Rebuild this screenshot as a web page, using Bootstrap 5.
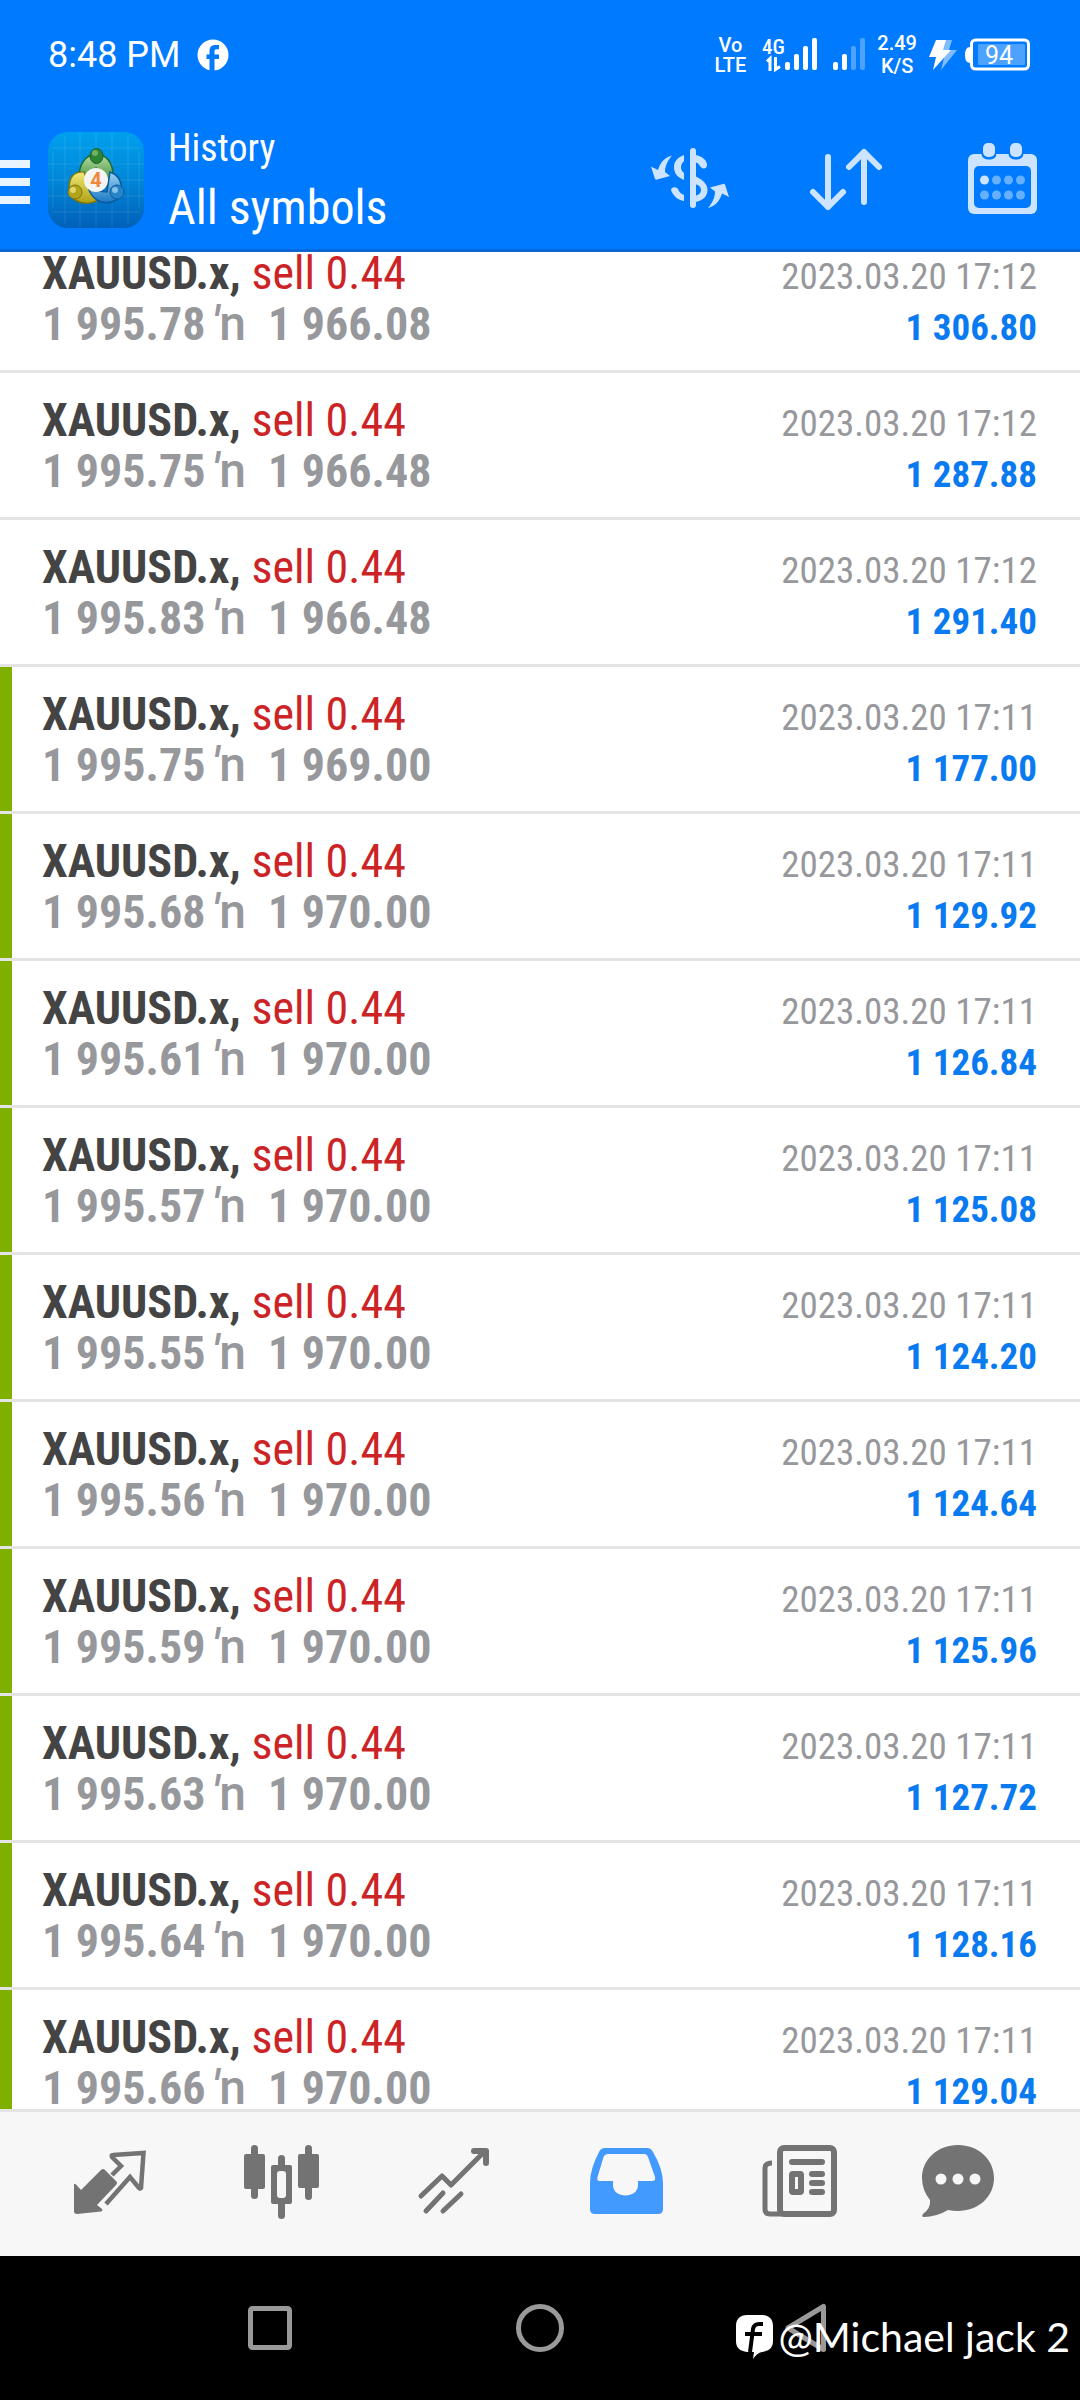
<!DOCTYPE html>
<html lang="en">
<head>
<meta charset="utf-8">
<meta name="viewport" content="width=device-width, initial-scale=1">
<title>History</title>
<link href="https://cdn.jsdelivr.net/npm/bootstrap@5.3.0/dist/css/bootstrap.min.css" rel="stylesheet">
<style>
  body { font-family: "Roboto Condensed", Roboto, sans-serif; background: #fff; }
  svg { display: block; flex: none; overflow: visible; }
  .topbar { background: #007aff; color: #fff; }
  .statusline { height: 108px; padding: 2px 50px 0 48px; font-family: Roboto, sans-serif; font-size: 36px; }
  .stacked { font-size: 20px; line-height: 20px; font-weight: 500; }
  .stacked.speed { line-height: 23px; }
  .appbar { height: 144px; padding-right: 33px; box-shadow: inset 0 -3px #0a68d4; }
  .appbar button, .tabs a { background: none; border: 0; padding: 0; }
  .appname { margin-left: 22px; }
  .appname .sub { font-size: 38px; line-height: 56px; }
  .appname h1 { font-size: 48px; line-height: 64px; font-weight: 400; margin: 0; }
  .tools { gap: 66px; }
  .deals { min-height: 0; }
  .deals ul { margin-top: -26px; }
  .deal { height: 147px; padding: 22px 43px 0 42px; border-bottom: 3px solid #e4e4e4; position: relative; }
  .deal div { font-size: 46px; line-height: 51px; height: 51px; white-space: pre; }
  .deal.closed::before { content: ""; position: absolute; left: 0; top: 0; bottom: 0; width: 12px; background: #7fb000; }
  .deal b { color: #444; }
  .side { color: #cc2426; }
  .price { color: #97989c; font-weight: 700; }
  .price span { font-family: Roboto, sans-serif; font-weight: 500; font-size: 48px; line-height: 40px; margin: 0 22px 0 6px; }
  time { font-size: 37px; color: #97989c; }
  .deal strong { font-size: 37px; color: #0a7af0; }
  .tabs { height: 147px; padding: 0 24px; background: #f7f7f7; border-top: 3px solid #e4e4e4; color: #737373; }
  .tabs a { color: inherit; }
  .tabs a.active { color: #429aff; }
  .sysnav { height: 144px; padding: 0 135px; background: #000; position: relative; color: #999; }
  .sysnav button { background: none; border: 0; padding: 0; color: inherit; }
  .credit { position: absolute; right: 10px; bottom: 38px; gap: 6px; font-family: Lato, sans-serif; font-size: 41px; line-height: 50px; color: #fff; }
</style>
<script src="https://cdn.jsdelivr.net/npm/bootstrap@5.3.0/dist/js/bootstrap.bundle.min.js"></script>
</head>
<body class="vh-100 d-flex flex-column overflow-hidden">

<header class="topbar flex-shrink-0">
  <div class="statusline d-flex align-items-center">
    <span>8:48 PM</span>
    <svg class="ms-3" width="32" height="32" viewBox="0 0 32 32"><circle cx="16" cy="16" r="15.500" fill="#fff"/><path d="M12.500 32V20H9.500v-4.500h3V12c0-4 2-6 6-6h3.500v4.300h-2.500c-1.500 0-2 .7-2 2v3.200h4.500V20h-4.500v12z" fill="#007aff"/></svg>
    <div class="ms-auto d-flex align-items-center">
      <div class="stacked text-center">Vo<br>LTE</div>
      <svg class="ms-3" width="55" height="36" viewBox="0 0 55 36" fill="#fff">
        <text x="0" y="17" font-size="21" font-weight="500" font-family="Roboto Condensed, sans-serif">4G</text>
        <path d="M8 34V21.500L5 24.500M13.500 20v12.500l4.500-3" fill="none" stroke="#fff" stroke-width="3"/>
        <rect x="23" y="25" width="5" height="8" rx="2"/><rect x="32" y="17" width="5" height="16" rx="2"/><rect x="41" y="9" width="5" height="24" rx="2"/><rect x="50" y="1" width="5" height="32" rx="2"/>
      </svg>
      <svg class="ms-3" width="32" height="36" viewBox="0 0 32 36" fill="#fff">
        <rect x="0" y="25" width="5" height="8" rx="2"/><rect x="9" y="17" width="5" height="16" rx="2"/><g opacity=".3"><rect x="18" y="9" width="5" height="24" rx="2"/><rect x="27" y="1" width="5" height="32" rx="2"/></g>
      </svg>
      <div class="stacked speed text-center ms-2 ps-1">2.49<br>K/S</div>
      <svg class="ms-2 me-1 ps-1" width="32" height="30" viewBox="0 0 28 30"><path d="M14 0h9l-3 10h8L12 30l3-12h-6z" fill="#fff" opacity=".5"/><path d="M7 0h10l-3 10h8L4 30l3-13H0z" fill="#fff"/></svg>
      <svg class="ms-1" width="65" height="34" viewBox="0 0 65 34"><path d="M5 9Q0 9 0 17t5 8z" fill="#fff"/><rect x="6.500" y="2" width="57" height="29" rx="4" fill="none" stroke="#fff" stroke-width="3"/><rect x="13" y="6" width="47" height="21" rx="1" fill="#fff" opacity=".3"/><text x="34" y="26" text-anchor="middle" font-size="25" fill="#fff" font-family="Roboto, sans-serif">94</text></svg>
    </div>
  </div>

  <div class="appbar d-flex align-items-center">
    <button type="button" aria-label="Menu"><svg width="30" height="48" viewBox="0 0 30 48" fill="#eaf4ff"><path d="M0 4h30v8H0zM0 22h30v8H0zM0 40h30v8H0z"/></svg></button>
    <svg class="ms-3" width="100" height="96" viewBox="-2 0 100 96">
      <defs>
        <linearGradient id="lg" x1="0" y1="0" x2="0" y2="1"><stop offset="0" stop-color="#00a0ee"/><stop offset=".5" stop-color="#0087d8"/><stop offset="1" stop-color="#0060b8"/></linearGradient>
        <linearGradient id="gg" x1="0" y1="0" x2="0" y2="1"><stop offset="0" stop-color="#b8dca0"/><stop offset="1" stop-color="#23802c"/></linearGradient>
        <linearGradient id="gy" x1="0" y1="0" x2="0" y2="1"><stop offset="0" stop-color="#f0e878"/><stop offset="1" stop-color="#b0a012"/></linearGradient>
        <linearGradient id="gb" x1="0" y1="0" x2="0" y2="1"><stop offset="0" stop-color="#a0d4f4"/><stop offset="1" stop-color="#1878c4"/></linearGradient>
      </defs>
      <rect width="96" height="96" rx="20" fill="url(#lg)"/>
      <path d="M5 20v56M17 4v88M32 1v94M48 0v96M64 1v94M80 4v88M91 20v56M4 16h88M0 32h96M0 48h96M0 64h96M4 80h88" stroke="#fff" stroke-opacity=".1"/>
      <path d="M31 48C29 14 67 14 65 46L60 56 48 36z" fill="url(#gg)" stroke="#1c6a2c" stroke-width="1.500"/>
      <path d="M36 40C18 38 18 62 27 68c8 5 20 4 25-2L40 50z" fill="url(#gy)" stroke="#7a7410" stroke-width="1.500"/>
      <path d="M62 40c14 5 14 22 6 28-10 6-22 2-27-10l18 2z" fill="url(#gb)" stroke="#0c5a9c" stroke-width="1.500"/>
      <ellipse cx="48.500" cy="24" rx="6.500" ry="7.500" fill="#2c8434" stroke="#1c6024"/><ellipse cx="47" cy="21" rx="3" ry="3" fill="#a0d090" opacity=".6"/>
      <circle cx="27" cy="60" r="7" fill="#b4a41c" stroke="#807410"/><circle cx="25" cy="58" r="3" fill="#f4ec90" opacity=".7"/>
      <circle cx="69" cy="60" r="7" fill="#2884c8" stroke="#0c5a9c"/><circle cx="67" cy="58" r="3" fill="#b0dcf8" opacity=".7"/>
      <circle cx="48" cy="48" r="12" fill="#f4f4f2"/>
      <text x="48" y="55" text-anchor="middle" font-size="20" font-weight="700" fill="#f0883c" font-family="Roboto, sans-serif">4</text>
    </svg>
    <div class="appname">
      <div class="sub">History</div>
      <h1>All symbols</h1>
    </div>
    <div class="tools d-flex ms-auto">
      <button type="button" aria-label="Filter by symbol"><svg width="90" height="74" viewBox="0 0 90 74" fill="#cce4ff">
        <rect x="45" y="5" width="6" height="60" rx="3"/>
        <path d="M39 12C31 15 29 20 29 24c0 6 3 10 10 13v-7c-2-2-3-3-3-6 0-2 1-4 3-6zM26 47c0-3 5-4 7-1 1 3 3 5 6 6v6c-6-1-11-5-13-11zM50 12c8 1 12 6 12 10 0 4-4 5-7 1-1-2-2-3-5-4zM50 33c8 4 12.500 8 12.500 14S58 58 50 59v-6c4-1 6-3 6-6s-2-5-6-6z"/>
        <path id="swing" d="M27 12.500C19 15 15 20 13 27L6 23.500 10 36q1 1 2 .5L25 33l-5-4c0-6 3-12 7-16.500z"/>
        <use href="#swing" transform="rotate(180 45 38.750)"/>
      </svg></button>
      <button type="button" aria-label="Sort"><svg width="90" height="74" viewBox="0 0 90 74" fill="none" stroke="#cce4ff" stroke-width="6" stroke-linecap="round" stroke-linejoin="round"><path d="M27 14v50M12 49l15 15 15-15M63 59V9M48 24L63 9l15 15"/></svg></button>
      <button type="button" aria-label="Choose period"><svg width="90" height="74" viewBox="0 0 90 74">
        <rect x="11" y="11" width="69" height="60" rx="6" fill="#cce4ff"/><rect x="17" y="23" width="57" height="42" rx="5" fill="#007aff"/>
        <rect x="24.500" y="-2" width="15" height="18.500" rx="6" fill="#007aff"/><rect x="51.500" y="-2" width="15" height="18.500" rx="6" fill="#007aff"/>
        <rect x="26" y="0" width="12" height="14" rx="5" fill="#cce4ff"/><rect x="53" y="0" width="12" height="14" rx="5" fill="#cce4ff"/>
        <g fill="#66b0ff"><circle cx="27.500" cy="37" r="4.500" fill="#cce4ff"/><circle cx="39.500" cy="37" r="4.500"/><circle cx="51.500" cy="37" r="4.500"/><circle cx="63.500" cy="37" r="4.500"/><circle cx="27.500" cy="52" r="4.500"/><circle cx="39.500" cy="52" r="4.500"/><circle cx="51.500" cy="52" r="4.500"/><circle cx="63.500" cy="52" r="4.500"/></g>
      </svg></button>
    </div>
  </div>
</header>

<main class="deals flex-grow-1 overflow-hidden">
  <ul class="list-unstyled mb-0">
    <li class="deal"><div class="d-flex justify-content-between align-items-baseline"><span><b>XAUUSD.x,</b> <span class="side">sell 0.44</span></span><time>2023.03.20 17:12</time></div><div class="d-flex justify-content-between align-items-baseline"><span class="price">1 995.78<span><i>'</i>n</span>1 966.08</span><strong>1 306.80</strong></div></li>
    <li class="deal"><div class="d-flex justify-content-between align-items-baseline"><span><b>XAUUSD.x,</b> <span class="side">sell 0.44</span></span><time>2023.03.20 17:12</time></div><div class="d-flex justify-content-between align-items-baseline"><span class="price">1 995.75<span><i>'</i>n</span>1 966.48</span><strong>1 287.88</strong></div></li>
    <li class="deal"><div class="d-flex justify-content-between align-items-baseline"><span><b>XAUUSD.x,</b> <span class="side">sell 0.44</span></span><time>2023.03.20 17:12</time></div><div class="d-flex justify-content-between align-items-baseline"><span class="price">1 995.83<span><i>'</i>n</span>1 966.48</span><strong>1 291.40</strong></div></li>
    <li class="deal closed"><div class="d-flex justify-content-between align-items-baseline"><span><b>XAUUSD.x,</b> <span class="side">sell 0.44</span></span><time>2023.03.20 17:11</time></div><div class="d-flex justify-content-between align-items-baseline"><span class="price">1 995.75<span><i>'</i>n</span>1 969.00</span><strong>1 177.00</strong></div></li>
    <li class="deal closed"><div class="d-flex justify-content-between align-items-baseline"><span><b>XAUUSD.x,</b> <span class="side">sell 0.44</span></span><time>2023.03.20 17:11</time></div><div class="d-flex justify-content-between align-items-baseline"><span class="price">1 995.68<span><i>'</i>n</span>1 970.00</span><strong>1 129.92</strong></div></li>
    <li class="deal closed"><div class="d-flex justify-content-between align-items-baseline"><span><b>XAUUSD.x,</b> <span class="side">sell 0.44</span></span><time>2023.03.20 17:11</time></div><div class="d-flex justify-content-between align-items-baseline"><span class="price">1 995.61<span><i>'</i>n</span>1 970.00</span><strong>1 126.84</strong></div></li>
    <li class="deal closed"><div class="d-flex justify-content-between align-items-baseline"><span><b>XAUUSD.x,</b> <span class="side">sell 0.44</span></span><time>2023.03.20 17:11</time></div><div class="d-flex justify-content-between align-items-baseline"><span class="price">1 995.57<span><i>'</i>n</span>1 970.00</span><strong>1 125.08</strong></div></li>
    <li class="deal closed"><div class="d-flex justify-content-between align-items-baseline"><span><b>XAUUSD.x,</b> <span class="side">sell 0.44</span></span><time>2023.03.20 17:11</time></div><div class="d-flex justify-content-between align-items-baseline"><span class="price">1 995.55<span><i>'</i>n</span>1 970.00</span><strong>1 124.20</strong></div></li>
    <li class="deal closed"><div class="d-flex justify-content-between align-items-baseline"><span><b>XAUUSD.x,</b> <span class="side">sell 0.44</span></span><time>2023.03.20 17:11</time></div><div class="d-flex justify-content-between align-items-baseline"><span class="price">1 995.56<span><i>'</i>n</span>1 970.00</span><strong>1 124.64</strong></div></li>
    <li class="deal closed"><div class="d-flex justify-content-between align-items-baseline"><span><b>XAUUSD.x,</b> <span class="side">sell 0.44</span></span><time>2023.03.20 17:11</time></div><div class="d-flex justify-content-between align-items-baseline"><span class="price">1 995.59<span><i>'</i>n</span>1 970.00</span><strong>1 125.96</strong></div></li>
    <li class="deal closed"><div class="d-flex justify-content-between align-items-baseline"><span><b>XAUUSD.x,</b> <span class="side">sell 0.44</span></span><time>2023.03.20 17:11</time></div><div class="d-flex justify-content-between align-items-baseline"><span class="price">1 995.63<span><i>'</i>n</span>1 970.00</span><strong>1 127.72</strong></div></li>
    <li class="deal closed"><div class="d-flex justify-content-between align-items-baseline"><span><b>XAUUSD.x,</b> <span class="side">sell 0.44</span></span><time>2023.03.20 17:11</time></div><div class="d-flex justify-content-between align-items-baseline"><span class="price">1 995.64<span><i>'</i>n</span>1 970.00</span><strong>1 128.16</strong></div></li>
    <li class="deal closed"><div class="d-flex justify-content-between align-items-baseline"><span><b>XAUUSD.x,</b> <span class="side">sell 0.44</span></span><time>2023.03.20 17:11</time></div><div class="d-flex justify-content-between align-items-baseline"><span class="price">1 995.66<span><i>'</i>n</span>1 970.00</span><strong>1 129.04</strong></div></li>
  </ul>
</main>

<nav class="tabs d-flex align-items-center flex-shrink-0">
  <a href="#" class="flex-fill d-flex justify-content-center" aria-label="Quotes"><svg width="96" height="96" viewBox="0 0 96 96">
    <path d="M12 49q0-2 1.500-1L19 54 39 34q2-2 4 0l11 11q2 2 0 4L35 69l5 4q1 2-1 2.500L15 78q-3 0-3-3z" fill="currentColor"/>
    <path d="M50 39l9-9-9-9q-1-2 1-2L81.500 17l-2.500 35q-1 1-2 0l-9-11-24 27" fill="none" stroke="currentColor" stroke-width="4.500"/>
  </svg></a>
  <a href="#" class="flex-fill d-flex justify-content-center" aria-label="Chart"><svg width="96" height="96" viewBox="0 0 96 96" fill="currentColor">
    <rect x="17" y="9" width="7" height="54" rx="3.500"/><rect x="10" y="18" width="21" height="35" rx="2"/>
    <rect x="71" y="9" width="7" height="55" rx="3.500"/><rect x="64" y="18" width="21" height="34" rx="2"/>
    <rect x="44" y="19" width="7" height="64" rx="3.500"/><rect x="37" y="29" width="21" height="39" rx="2"/><rect x="43" y="35" width="9" height="27" rx="3" fill="#f7f7f7"/>
  </svg></a>
  <a href="#" class="flex-fill d-flex justify-content-center" aria-label="Trade"><svg width="96" height="96" viewBox="0 0 96 96" fill="none" stroke="currentColor" stroke-width="5" stroke-linecap="round" stroke-linejoin="round">
    <path d="M15 60l21-20 9 9 34-34M20 75l17-18M37 75l18-17"/><path d="M68 15h12v12" stroke-width="6"/>
  </svg></a>
  <a href="#" class="active flex-fill d-flex justify-content-center" aria-label="History" aria-current="page"><svg width="96" height="96" viewBox="0 0 96 96" fill="currentColor">
    <path fill-rule="evenodd" d="M27 12h42q4 0 6 4 10 17 10 31v26q0 5-5 5H17q-5 0-5-5V47Q12 33 21 16q2-4 6-4zm3 6q-3 0-4.500 3L19.500 41q-1 4 2 4H35v4c0 14 25 14 25 0v-4h14q4 0 3-4L70 21q-1-3-4-3z"/>
  </svg></a>
  <a href="#" class="flex-fill d-flex justify-content-center" aria-label="News"><svg width="96" height="96" viewBox="0 0 96 96" fill="none" stroke="currentColor" stroke-width="6">
    <rect x="30" y="12" width="54" height="66" rx="4"/><path d="M22 27q-7 0-7 5v41q0 5 5 5h12" stroke-width="5"/>
    <path d="M42 26h30M62 38h10M62 47h10M62 56h10" stroke-linecap="round"/><rect x="42" y="38" width="9" height="18" rx="1"/>
  </svg></a>
  <a href="#" class="flex-fill d-flex justify-content-center" aria-label="Messages"><svg width="96" height="96" viewBox="0 0 96 96">
    <path d="M36 9c20 0 36 14 36 33S56 75 36 75q-5 0-10-1Q14 81 2 81q-3 0-1-3 8-6 7-14Q0 54 0 42C0 23 16 9 36 9z" fill="currentColor"/>
    <g fill="#f7f7f7"><circle cx="19" cy="43" r="5.500"/><circle cx="36" cy="43" r="5.500"/><circle cx="53" cy="43" r="5.500"/></g>
  </svg></a>
</nav>

<footer class="sysnav d-flex align-items-center flex-shrink-0">
  <button type="button" class="w-100 d-flex justify-content-center" aria-label="Recent apps"><svg width="50" height="50" viewBox="0 0 50 50" fill="none" stroke="currentColor" stroke-width="5"><rect x="5.500" y="5.500" width="39" height="39" rx="2"/></svg></button>
  <button type="button" class="w-100 d-flex justify-content-center" aria-label="Home"><svg width="50" height="50" viewBox="0 0 50 50" fill="none" stroke="currentColor" stroke-width="5"><circle cx="25" cy="25" r="21.500"/></svg></button>
  <button type="button" class="w-100 d-flex justify-content-center" aria-label="Back"><svg width="50" height="50" viewBox="0 0 50 50" fill="none" stroke="currentColor" stroke-width="5" stroke-linejoin="round"><path d="M38.500 3.500v43L3 25z"/></svg></button>
  <div class="credit d-flex align-items-center">
    <svg width="37" height="44" viewBox="0 0 37 44"><path d="M11 0h15c7 0 11 4 11 11v15c0 7-4 10-11 11q-5 1-9 7l1-7h-7C4 36 0 33 0 26V11C0 4 4 0 11 0z" fill="#fff"/><path d="M14 37l3-23q1-5 6-5h4M9 19h17" fill="none" stroke="#000" stroke-width="4"/></svg>
    <span>@Michael jack 2</span>
  </div>
</footer>
</body>
</html>
